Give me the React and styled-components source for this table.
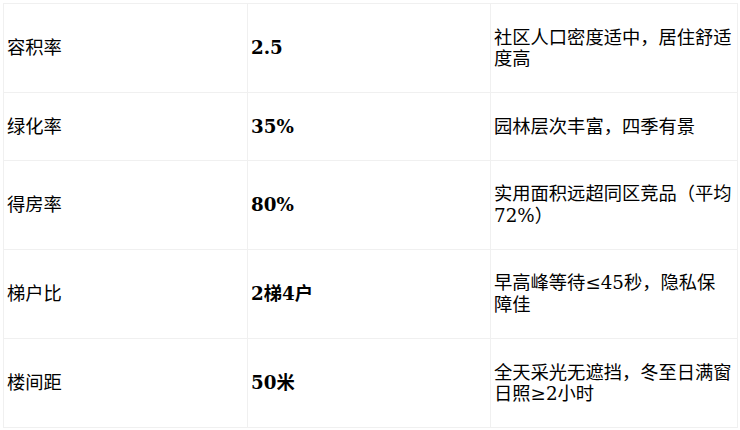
import styled, { createGlobalStyle } from "styled-components";

const GlobalStyle = createGlobalStyle`
  body {
    margin: 0;
    background: #ffffff;
    font-family: "DejaVu Serif", "Noto Sans CJK SC", serif;
    color: #000000;
  }
`;

const rows = [
  { name: "容积率", value: "2.5", note: "社区人口密度适中，居住舒适度高" },
  { name: "绿化率", value: "35%", note: "园林层次丰富，四季有景" },
  { name: "得房率", value: "80%", note: "实用面积远超同区竞品（平均72%）" },
  { name: "梯户比", value: "2梯4户", note: "早高峰等待≤45秒，隐私保障佳" },
  { name: "楼间距", value: "50米", note: "全天采光无遮挡，冬至日满窗日照≥2小时" },
];

function App() {
  return (
    <Page>
      <GlobalStyle />
      <Table>
        <colgroup>
          <Column $width={244} />
          <Column $width={243} />
          <Column $width={247} />
        </colgroup>
        <tbody>
          {rows.map((row) => (
            <tr key={row.name}>
              <Label>{row.name}</Label>
              <Value>{row.value}</Value>
              <Note>{row.note}</Note>
            </tr>
          ))}
        </tbody>
      </Table>
    </Page>
  );
}

export default App;

const Page = styled.div`
  padding: 3px;
`;

const Table = styled.table`
  width: 734px;
  border-collapse: collapse;
  table-layout: fixed;
`;

const Column = styled.col`
  width: ${(p) => p.$width}px;
`;

const Cell = styled.td`
  padding: 22.5px 3px;
  border: 1px solid #f0f0f0;
  font-size: 18.3px;
  line-height: 21.6px;
  vertical-align: middle;
  font-weight: 400;
`;

const Label = styled(Cell)``;

const Value = styled(Cell)`
  font-weight: 700;
`;

const Note = styled(Cell)`
  padding-right: 4.5px;
`;
